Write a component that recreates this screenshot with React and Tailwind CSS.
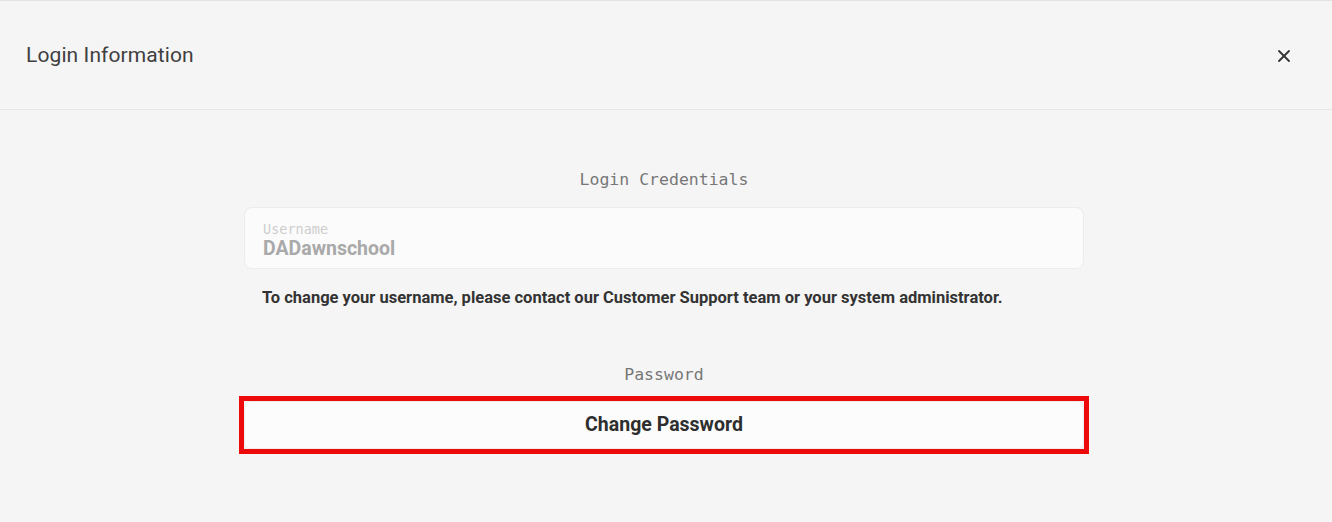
import { X } from 'lucide-react';

const mono = { fontFamily: "'DejaVu Sans Mono', 'Liberation Mono', monospace" };

export default function App() {
  return (
    <div
      className="w-[1332px] h-[522px] bg-[#f5f5f5] border-t border-[#e2e2e2] overflow-hidden"
      style={{ fontFamily: "Roboto, 'Noto Sans', sans-serif" }}
    >
      {/* Header */}
      <div className="h-[109px] flex items-center justify-between pl-[26px] pr-[34px] pt-[2px] border-b border-[#e6e6e6]">
        <h2 className="text-[21px] text-[#404040] tracking-[0.1px]">Login Information</h2>
        <button className="text-[#333] p-1">
          <X size={20} strokeWidth={2.2} />
        </button>
      </div>

      {/* Body */}
      <div className="flex flex-col items-center pr-1 pt-[60px]">
        <p className="text-[16.5px] text-[#777] leading-5" style={mono}>Login Credentials</p>

        <div className="w-[840px] mt-[17px]">
          <div className="h-[62px] rounded-lg bg-[#fbfbfb] border border-[#ececec] px-[18px] pt-[13px]">
            <p className="text-[13.5px] leading-4 text-[#cdcdcd]" style={mono}>Username</p>
            <p className="text-[19.5px] leading-6 font-bold text-[#a9a9a9]">DADawnschool</p>
          </div>
          <p className="mt-[19px] pl-[18px] text-[16.5px] font-bold text-[#333] leading-5">
            To change your username, please contact our Customer Support team or your system administrator.
          </p>
        </div>

        <p className="mt-[57px] text-[16.5px] text-[#777] leading-5" style={mono}>Password</p>

        <div className="mt-[11px] border-[5px] border-[#ec0a0a]">
          <button className="w-[840px] h-[48px] rounded-md bg-[#fcfcfc] border border-[#ececec] text-[19.5px] font-bold text-[#2e2e2e]">
            Change Password
          </button>
        </div>
      </div>
    </div>
  );
}
